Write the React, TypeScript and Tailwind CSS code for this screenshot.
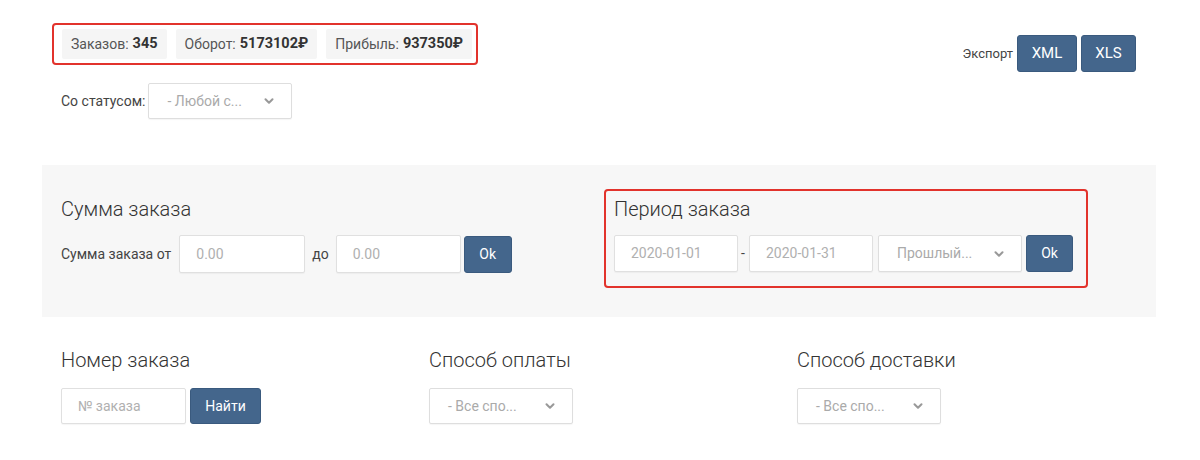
import { ChevronDown } from "lucide-react";

const stats = [
  { label: "Заказов:", value: "345" },
  { label: "Оборот:", value: "5173102₽" },
  { label: "Прибыль:", value: "937350₽" },
];

const Chevron = () => (
  <ChevronDown className="h-[14px] w-[14px] text-[#999]" strokeWidth={3.5} />
);

const Select = ({ text, width }: { text: string; width: string }) => (
  <div
    className={`flex h-[36px] items-center justify-between rounded-[2px] border border-[#dedede] bg-white pl-[18px] pr-[15px] shadow-[0_1px_1px_rgba(0,0,0,0.04)] ${width}`}
  >
    <span className="text-[14px] text-[#aaa]">{text}</span>
    <Chevron />
  </div>
);

const Input = ({ text, width, h = "h-[37px]" }: { text: string; width: string; h?: string }) => (
  <div
    className={`flex items-center rounded-[2px] border border-[#e0e0e0] bg-white pl-[16px] shadow-[0_1px_1px_rgba(0,0,0,0.04)] ${width} ${h}`}
  >
    <span className="text-[14px] text-[#b0b0b0]">{text}</span>
  </div>
);

const Btn = ({ children, width, h = "h-[37px]", size = "text-[14px]" }: { children: string; width: string; h?: string; size?: string }) => (
  <button
    className={`flex items-center justify-center rounded-[3px] border border-[#3a5a7e] bg-[#44668c] text-white ${size} ${width} ${h}`}
  >
    {children}
  </button>
);

export default function App() {
  return (
    <div className="min-h-[460px] w-[1200px] bg-white font-['Roboto',sans-serif] text-[#444]">
      <div className="ml-[42px] w-[1114px]">
        {/* top */}
        <div className="flex items-start justify-between pl-[10px] pr-[20px] pt-[23px]">
          <div className="flex h-[42px] items-center gap-[9px] rounded-[4px] border-2 border-[#e2332c] pl-[8px] pr-[4px]">
            {stats.map((s) => (
              <div key={s.label} className="flex h-[30px] items-center rounded-[2px] bg-[#f5f5f5] px-[9px] text-[14px]">
                <span className="text-[#555]">{s.label}</span>
                <b className="ml-[4px] text-[14.5px] font-bold text-[#333]">{s.value}</b>
              </div>
            ))}
          </div>
          <div className="mt-[12px] flex items-center gap-[4px]">
            <span className="text-[13px] text-[#444]">Экспорт</span>
            <Btn width="w-[60px]" size="text-[15px]">XML</Btn>
            <Btn width="w-[55px]" size="text-[15px]">XLS</Btn>
          </div>
        </div>

        <div className="mt-[11px] flex items-center gap-[3px] pl-[19px]">
          <span className="text-[14px]">Со статусом:</span>
          <Select text="- Любой с..." width="w-[144px]" />
        </div>

        {/* filter panel */}
        <div className="mt-[46px] grid h-[152px] grid-cols-[543px_1fr] items-start bg-[#f7f7f7] pl-[19px]">
          <div className="pt-[32px]">
            <h2 className="text-[20px] font-light leading-[24px] text-[#333]">Сумма заказа</h2>
            <div className="mt-[14px] flex items-center">
              <span className="mr-[8px] text-[14px]">Сумма заказа от</span>
              <Input text="0.00" width="w-[126px]" h="h-[38px]" />
              <span className="mx-[7px] text-[14px]">до</span>
              <Input text="0.00" width="w-[125px]" h="h-[38px]" />
              <div className="ml-[3px]">
                <Btn width="w-[48px]">Ok</Btn>
              </div>
            </div>
          </div>
          <div className="pt-[24px]">
            <div className="w-[484px] rounded-[4px] border-2 border-[#e2332c] pb-[14px] pl-[8px] pt-[6px]">
              <h2 className="text-[20px] font-light leading-[24px] text-[#333]">Период заказа</h2>
              <div className="mt-[14px] flex items-center">
                <Input text="2020-01-01" width="w-[124px]" />
                <span className="mx-[3px] w-[5px] text-[14px]">-</span>
                <Input text="2020-01-31" width="w-[124px]" />
                <div className="ml-[5px]">
                  <Select text="Прошлый..." width="w-[144px] h-[37px]" />
                </div>
                <div className="ml-[4px]">
                  <Btn width="w-[47px]">Ok</Btn>
                </div>
              </div>
            </div>
          </div>
        </div>

        {/* bottom */}
        <div className="grid grid-cols-[368px_368px_368px] pl-[19px] pt-[31px]">
          <div>
            <h2 className="text-[20px] font-light leading-[24px] text-[#333]">Номер заказа</h2>
            <div className="mt-[16px] flex items-center gap-[4px]">
              <Input text="№ заказа" width="w-[125px]" h="h-[36px]" />
              <Btn width="w-[71px]" h="h-[36px]">Найти</Btn>
            </div>
          </div>
          <div>
            <h2 className="text-[20px] font-light leading-[24px] text-[#333]">Способ оплаты</h2>
            <div className="mt-[16px]">
              <Select text="- Все спо..." width="w-[144px]" />
            </div>
          </div>
          <div>
            <h2 className="text-[20px] font-light leading-[24px] text-[#333]">Способ доставки</h2>
            <div className="mt-[16px]">
              <Select text="- Все спо..." width="w-[144px]" />
            </div>
          </div>
        </div>
      </div>
    </div>
  );
}
